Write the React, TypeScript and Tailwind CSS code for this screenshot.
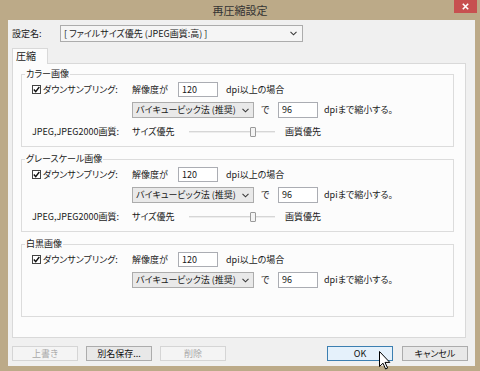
import React from "react";

const jp = "font-['Noto_Sans_CJK_JP',sans-serif] [font-feature-settings:'palt']";

function Chevron() {
  return (
    <svg width="7" height="5" viewBox="0 0 7 5" fill="none">
      <path d="M0.5 0.8L3.5 3.8L6.5 0.8" stroke="#3a3a3a" strokeWidth="1.1" />
    </svg>
  );
}

function Check() {
  return (
    <div className="flex h-[9px] w-[9px] shrink-0 items-center justify-center border border-[#444] bg-white">
      <svg width="7" height="7" viewBox="0 0 7 7" fill="none">
        <path d="M0.8 3.6L2.7 5.6L6.3 1" stroke="#111" strokeWidth="1.4" />
      </svg>
    </div>
  );
}

function Field({ value }: { value: string }) {
  return (
    <div className="flex h-full w-[40px] items-start border border-[#ABADB3] bg-white pl-[3px] pt-[1px] leading-[11px]">
      {value}
    </div>
  );
}

function Slider() {
  return (
    <div className="relative flex h-full w-[86px] items-center">
      <div className="h-[2px] w-full border-t border-[#D6D6D6] bg-[#EDEDED]" />
      <div className="absolute left-[61px] top-[2px] h-[10px] w-[6px] rounded-[1px] border border-[#9A9A9A] bg-[#F4F4F4]" />
    </div>
  );
}

function Group({ title, jpeg }: { title: string; jpeg?: boolean }) {
  return (
    <div className="flex h-[73px] w-[433px] flex-col border border-[#DCDCDC]">
      <span className="-mt-[7px] ml-[3px] self-start bg-[#FCFCFC] px-[1px] leading-[12px]">{title}</span>
      <div className="mt-[2px] flex h-[15px] items-center pl-[10px]">
        <div className="flex w-[100px] items-center gap-[2px]">
          <Check />
          <span>ダウンサンプリング:</span>
        </div>
        <span className="w-[46px]">解像度が</span>
        <Field value="120" />
        <span className="ml-[8px]">dpi以上の場合</span>
      </div>
      <div className="mt-[5px] flex h-[16px] items-center pl-[110px]">
        <div className="flex h-full w-[122px] items-center justify-between border border-[#ACACAC] bg-[#E9E9E9] pl-[3px] pr-[4px]">
          <span>バイキュービック法 (推奨)</span>
          <Chevron />
        </div>
        <span className="ml-[7px] w-[17px]">で</span>
        <Field value="96" />
        <span className="ml-[6px]">dpiまで縮小する。</span>
      </div>
      {jpeg && (
        <div className="mt-[7px] flex h-[14px] items-center pl-[10px]">
          <span className="w-[100px]">JPEG,JPEG2000画質:</span>
          <span className="w-[57px]">サイズ優先</span>
          <Slider />
          <span className="ml-[10px]">画質優先</span>
        </div>
      )}
    </div>
  );
}

function Btn({ label, kind }: { label: string; kind: "off" | "normal" | "default" }) {
  const look =
    kind === "off"
      ? "border-[#D5D5D5] bg-[#F4F4F4] text-[#A8A8A8]"
      : kind === "default"
      ? "border-[#3C7FB1] bg-[#E5F1FB] text-[#111]"
      : "border-[#ACACAC] bg-[#E8E8E8] text-[#111]";
  return (
    <div className={`flex h-[15px] w-[66px] items-center justify-center border ${look}`}>{label}</div>
  );
}

export default function App() {
  return (
    <div className={`relative flex h-[371px] w-[480px] flex-col bg-[#BCAA88] text-[9px] leading-[12px] text-[#1a1a1a] ${jp}`}>
      <div className="grid h-[20px] shrink-0 grid-cols-[1fr_auto_1fr] items-center">
        <div />
        <span className="text-[11px] text-[#333]">再圧縮設定</span>
        <div className="flex h-full items-start justify-end pr-[3px]">
          <div className="flex h-[13px] w-[23px] items-center justify-center bg-[#C75050]">
            <svg width="7" height="7" viewBox="0 0 7 7">
              <path d="M0.8 0.8L6.2 6.2M6.2 0.8L0.8 6.2" stroke="#fff" strokeWidth="1.6" />
            </svg>
          </div>
        </div>
      </div>

      <div className="mb-[5px] ml-[8px] mr-[5px] flex flex-1 flex-col bg-[#F0F0F0]">
        <div className="mt-[5px] flex h-[17px] items-center pl-[4px]">
          <span className="w-[48px]">設定名:</span>
          <div className="flex h-full w-[243px] items-center justify-between border border-[#ACACAC] bg-[#F5F5F5] pl-[3px] pr-[5px]">
            <span>[ ファイルサイズ優先 (JPEG画質:高) ]</span>
            <Chevron />
          </div>
        </div>

        <div className="relative z-10 ml-[4px] mt-[6px] flex h-[16px] w-[36px] items-start border border-b-0 border-[#D9D9D9] bg-[#FCFCFC] pl-[3px] pt-[1px] text-[10px]">
          圧縮
        </div>
        <div className="-mt-px ml-[4px] flex h-[275px] w-[454px] flex-col gap-[12px] border border-[#D9D9D9] bg-[#FCFCFC] pl-[8px] pt-[10px]">
          <Group title="カラー画像" jpeg />
          <Group title="グレースケール画像" jpeg />
          <Group title="白黒画像" />
        </div>

        <div className="mt-[8px] flex items-center pl-[4px] pr-[7px]">
          <div className="flex gap-[8px]">
            <Btn label="上書き" kind="off" />
            <Btn label="別名保存..." kind="normal" />
            <Btn label="削除" kind="off" />
          </div>
          <div className="ml-auto flex gap-[9px]">
            <Btn label="OK" kind="default" />
            <Btn label="キャンセル" kind="normal" />
          </div>
        </div>
      </div>

      <svg className="absolute left-[379px] top-[351px]" width="12" height="19" viewBox="0 0 12 19">
        <path d="M0.5 0.5V15.5L4 12.2L6.6 18L8.6 17.1L6 11.4H10.8Z" fill="#fff" stroke="#000" strokeWidth="1" strokeLinejoin="round" />
      </svg>
    </div>
  );
}
